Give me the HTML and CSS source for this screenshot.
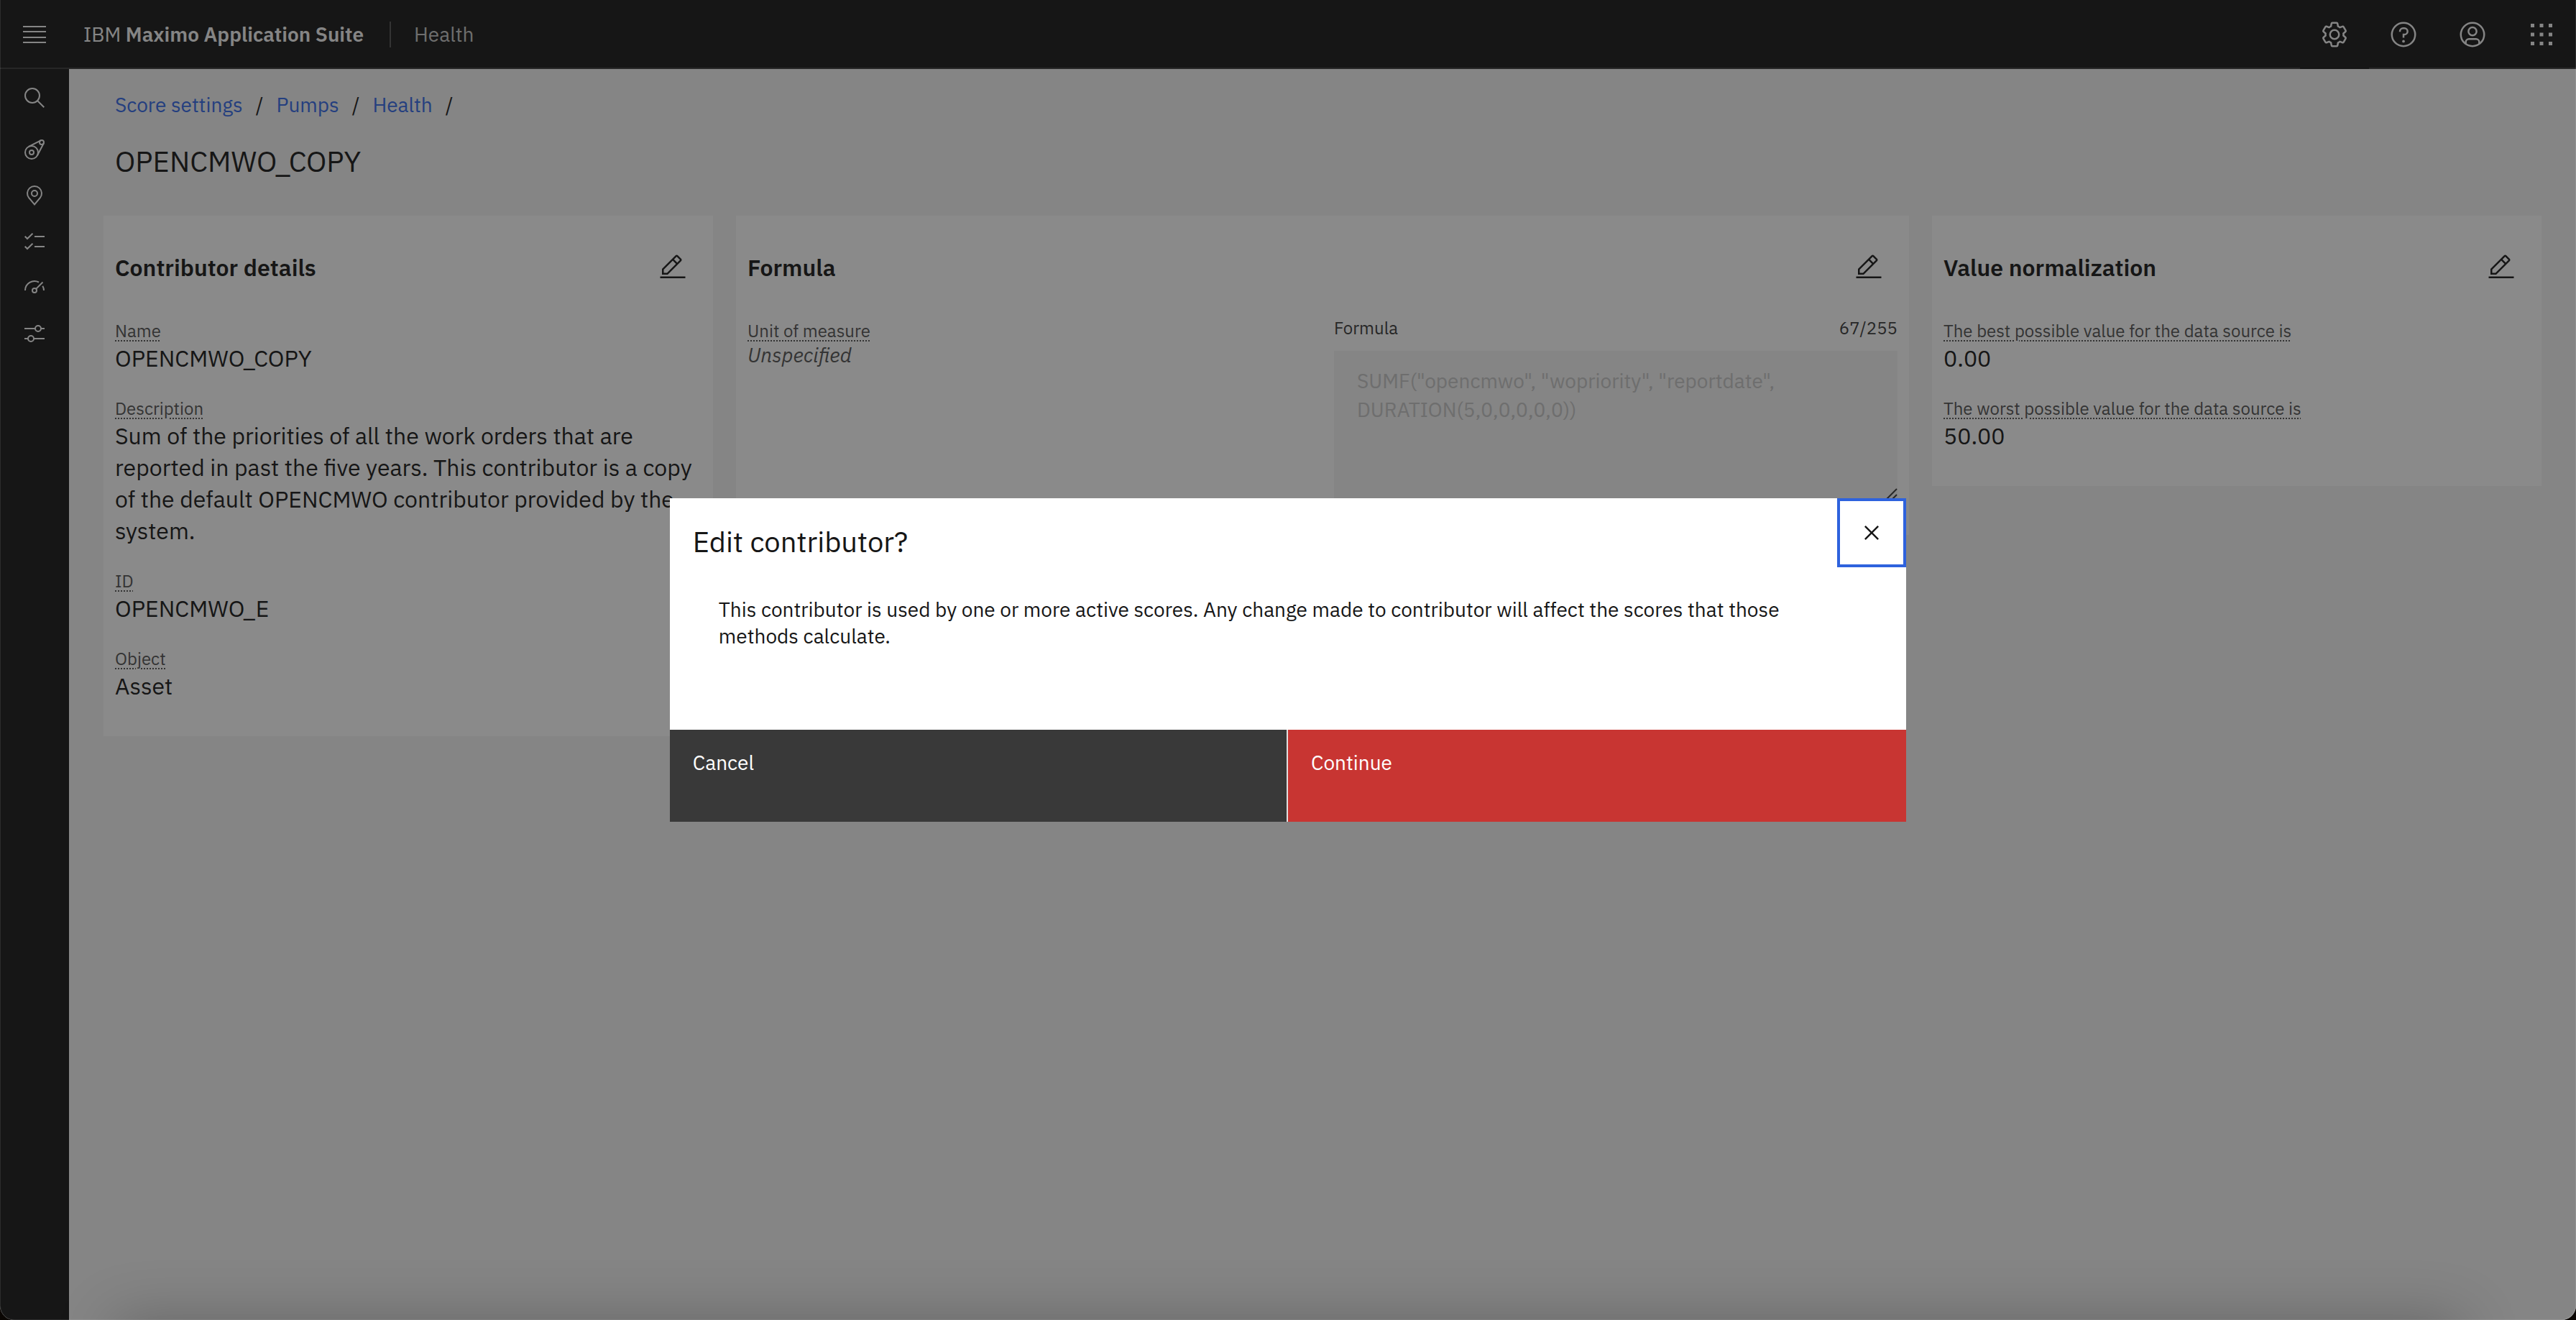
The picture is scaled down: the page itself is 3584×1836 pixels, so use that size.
FILE: index.html
```html
<!DOCTYPE html>
<html lang="en">
<head>
<meta charset="utf-8">
<meta name="viewport" content="width=device-width, initial-scale=1">
<title>IBM Maximo Application Suite - Health</title>
<link rel="stylesheet" href="styles.css">
</head>
<body>
<div class="app">
  <header class="topbar">
    <button class="topbar-button" type="button" aria-label="Menu">
      <svg class="icon-menu" viewBox="0 0 32 24"><path d="M0 0h32v2H0zM0 7h32v2H0zM0 15h32v2H0zM0 22h32v2H0z"/></svg>
    </button>
    <p class="brand">IBM <strong>Maximo Application Suite</strong></p>
    <span class="app-name">Health</span>
    <div class="topbar-actions">
      <button class="topbar-button topbar-button-current" type="button" aria-label="Settings">
        <svg class="icon-large" viewBox="0 0 32 32"><path d="M27,16.76c0-.25,0-.5,0-.76s0-.51,0-.77l1.92-1.68A2,2,0,0,0,29.3,11L26.94,7a2,2,0,0,0-1.73-1,2,2,0,0,0-.64.1l-2.43.82a11.35,11.35,0,0,0-1.31-.75l-.51-2.52a2,2,0,0,0-2-1.61H13.64a2,2,0,0,0-2,1.61l-.51,2.52a11.48,11.48,0,0,0-1.32.75L7.43,6.06A2,2,0,0,0,6.79,6,2,2,0,0,0,5.06,7L2.7,11a2,2,0,0,0,.41,2.51L5,15.24c0,.25,0,.5,0,.76s0,.51,0,.77L3.11,18.45A2,2,0,0,0,2.7,21L5.06,25a2,2,0,0,0,1.73,1,2,2,0,0,0,.64-.1l2.43-.82a11.35,11.35,0,0,0,1.31.75l.51,2.52a2,2,0,0,0,2,1.61h4.72a2,2,0,0,0,2-1.61l.51-2.52a11.48,11.48,0,0,0,1.32-.75l2.42.82a2,2,0,0,0,.64.1,2,2,0,0,0,1.73-1L29.3,21a2,2,0,0,0-.41-2.51ZM25.21,24l-3.43-1.16a8.86,8.86,0,0,1-2.71,1.57L18.36,28H13.64l-.71-3.55a9.36,9.36,0,0,1-2.7-1.57L6.79,24,4.43,20l2.72-2.4a8.9,8.9,0,0,1,0-3.13L4.43,12,6.79,8l3.43,1.16a8.86,8.86,0,0,1,2.71-1.57L13.64,4h4.72l.71,3.55a9.36,9.36,0,0,1,2.7,1.57L25.21,8,27.57,12l-2.72,2.4a8.9,8.9,0,0,1,0,3.13L27.57,20Z"/><path d="M16,22a6,6,0,1,1,6-6A5.94,5.94,0,0,1,16,22Zm0-10a3.91,3.91,0,0,0-4,4,3.91,3.91,0,0,0,4,4,3.91,3.91,0,0,0,4-4A3.91,3.91,0,0,0,16,12Z"/></svg>
      </button>
      <button class="topbar-button" type="button" aria-label="Help">
        <svg class="icon-large" viewBox="0 0 32 32"><circle class="line" cx="16" cy="16" r="13"/><circle cx="16" cy="23.5" r="1.5"/><path d="M17,8H15.5A4.49,4.49,0,0,0,11,12.5V13h2v-.5A2.5,2.5,0,0,1,15.5,10H17a2.5,2.5,0,0,1,0,5H15v4.5h2V17a4.5,4.5,0,0,0,0-9Z"/></svg>
      </button>
      <button class="topbar-button" type="button" aria-label="Account">
        <svg class="icon-large" viewBox="0 0 32 32"><circle class="line" cx="16" cy="16" r="13"/><circle class="line" cx="16" cy="12.500" r="4.500"/><path class="line" d="M8.500 26.500V24.500a3.500 3.500 0 0 1 3.500-3.500h8a3.500 3.500 0 0 1 3.500 3.500v2"/></svg>
      </button>
      <button class="topbar-button" type="button" aria-label="App switcher">
        <svg class="icon-large" viewBox="0 0 32 32"><path d="M4 4h4v4H4zM14 4h4v4h-4zM24 4h4v4h-4zM4 14h4v4H4zM14 14h4v4h-4zM24 14h4v4h-4zM4 24h4v4H4zM14 24h4v4h-4zM24 24h4v4h-4z"/></svg>
      </button>
    </div>
  </header>

  <div class="workspace">
    <nav class="sidenav" aria-label="Main">
      <button class="sidenav-search" type="button" aria-label="Search">
        <svg class="icon" viewBox="0 0 32 32"><circle class="line" cx="13" cy="13" r="10"/><path class="line" d="M20.500 20.500L29.300 29.300"/></svg>
      </button>
      <a class="sidenav-link" href="#assets" aria-label="Assets">
        <svg class="icon" viewBox="0 0 32 32"><circle class="line" cx="12" cy="20" r="9"/><circle class="line" cx="12" cy="20" r="3"/><circle class="line" cx="26" cy="6" r="3"/><path class="line" d="M8 11.900L24.700 3.300M20.200 23.700L28.800 7.200"/></svg>
      </a>
      <a class="sidenav-link" href="#locations" aria-label="Locations">
        <svg class="icon" viewBox="0 0 32 32"><circle class="line" cx="16" cy="13" r="4"/><path class="line" d="M16 28.400L8.200 19.200A10 10 0 1 1 23.800 19.200Z"/></svg>
      </a>
      <a class="sidenav-link" href="#work" aria-label="Work">
        <svg class="icon" viewBox="0 0 32 32"><path class="line" d="M2.700 8.700L6 12L13.500 4.700M16 9H30M2.700 22.700L6 26L13.500 18.700M16 23H30"/></svg>
      </a>
      <a class="sidenav-link" href="#scores" aria-label="Scores">
        <svg class="icon" viewBox="0 0 32 32"><path class="line" d="M3 20A13 13 0 0 1 22 8.500M27.300 13.700A13 13 0 0 1 29 20M18.100 17.900L27.500 8.500"/><circle class="line" cx="16" cy="20" r="3"/></svg>
      </a>
      <a class="sidenav-link" href="#settings" aria-label="Score settings">
        <svg class="icon" viewBox="0 0 32 32"><path class="line" d="M2 9H17M25 9H30M2 23H7M15 23H30"/><circle class="line" cx="21" cy="9" r="4"/><circle class="line" cx="11" cy="23" r="4"/></svg>
      </a>
    </nav>

    <main class="page">
      <nav class="breadcrumb" aria-label="Breadcrumb">
        <a class="crumb" href="#score-settings">Score settings</a><span class="slash">/</span>
        <a class="crumb" href="#pumps">Pumps</a><span class="slash">/</span>
        <a class="crumb" href="#health">Health</a><span class="slash">/</span>
      </nav>
      <h1 class="page-title">OPENCMWO_COPY</h1>

      <div class="cards">
        <section class="card">
          <div class="card-header">
            <h2 class="card-title">Contributor details</h2>
            <button class="edit" type="button" aria-label="Edit contributor details"><svg class="icon-large" viewBox="0 0 32 32"><path d="M2 26H30V28H2zM25.400 9c.8-.8.8-2 0-2.800l-3.600-3.600c-.8-.8-2-.8-2.800 0l-15 15V24h6.400L25.400 9zM20.400 4L24 7.600l-3 3L17.400 7 20.400 4zM6 22v-3.600l10-10 3.600 3.600-10 10H6z"/></svg></button>
          </div>
          <dl class="fields">
            <div><dt class="label"><span class="term">Name</span></dt><dd class="value">OPENCMWO_COPY</dd></div>
            <div><dt class="label"><span class="term">Description</span></dt><dd class="value">Sum of the priorities of all the work orders that are<br>reported in past the five years. This contributor is a copy<br>of the default OPENCMWO contributor provided by the<br>system.</dd></div>
            <div><dt class="label"><span class="term">ID</span></dt><dd class="value">OPENCMWO_E</dd></div>
            <div><dt class="label"><span class="term">Object</span></dt><dd class="value">Asset</dd></div>
          </dl>
        </section>

        <section class="card">
          <div class="card-header">
            <h2 class="card-title">Formula</h2>
            <button class="edit" type="button" aria-label="Edit formula"><svg class="icon-large" viewBox="0 0 32 32"><path d="M2 26H30V28H2zM25.400 9c.8-.8.8-2 0-2.800l-3.600-3.600c-.8-.8-2-.8-2.800 0l-15 15V24h6.400L25.400 9zM20.400 4L24 7.600l-3 3L17.400 7 20.400 4zM6 22v-3.600l10-10 3.600 3.600-10 10H6z"/></svg></button>
          </div>
          <div class="formula">
            <dl class="fields">
              <div><dt class="label"><span class="term">Unit of measure</span></dt><dd class="value value-empty">Unspecified</dd></div>
            </dl>
            <div class="expression">
              <div class="expression-head"><label for="formula">Formula</label><span>67/255</span></div>
              <div class="expression-box">
                <textarea id="formula" class="expression-input" disabled>SUMF("opencmwo", "wopriority", "reportdate",
DURATION(5,0,0,0,0,0))</textarea>
                <svg class="grip" viewBox="0 0 16 28"><path d="M1 26L15 12M9 26L15 20"/></svg>
              </div>
            </div>
          </div>
        </section>

        <section class="card">
          <div class="card-header">
            <h2 class="card-title">Value normalization</h2>
            <button class="edit" type="button" aria-label="Edit value normalization"><svg class="icon-large" viewBox="0 0 32 32"><path d="M2 26H30V28H2zM25.400 9c.8-.8.8-2 0-2.800l-3.600-3.600c-.8-.8-2-.8-2.800 0l-15 15V24h6.400L25.400 9zM20.400 4L24 7.600l-3 3L17.400 7 20.400 4zM6 22v-3.600l10-10 3.600 3.600-10 10H6z"/></svg></button>
          </div>
          <dl class="fields">
            <div><dt class="label"><span class="term">The best possible value for the data source is</span></dt><dd class="value">0.00</dd></div>
            <div><dt class="label"><span class="term">The worst possible value for the data source is</span></dt><dd class="value">50.00</dd></div>
          </dl>
        </section>
      </div>
    </main>
  </div>

  <div class="overlay">
    <dialog class="dialog" open aria-labelledby="dialog-title">
      <div class="dialog-head">
        <h2 id="dialog-title" class="dialog-title">Edit contributor?</h2>
        <button class="dialog-close" type="button" aria-label="Close"><svg class="icon-large" viewBox="0 0 32 32"><path d="M24 9.400L22.600 8 16 14.600 9.400 8 8 9.400 14.600 16 8 22.600 9.400 24 16 17.400 22.600 24 24 22.600 17.400 16z"/></svg></button>
      </div>
      <p class="dialog-text">This contributor is used by one or more active scores. Any change made to contributor will affect the scores that those<br>methods calculate.</p>
      <div class="dialog-actions">
        <button class="action action-cancel" type="button">Cancel</button>
        <button class="action action-danger" type="button">Continue</button>
      </div>
    </dialog>
  </div>
  <div class="window-shade"></div>
</div>
</body>
</html>
```
FILE: styles.css
```css
* { box-sizing: border-box; }

body {
  margin: 0;
  background: #0a0603;
  color: #161616;
  font-family: "IBM Plex Sans", "Noto Sans", sans-serif;
  font-size: 28px;
  line-height: 36px;
}

h1, h2, p, dl, dd { margin: 0; }

button {
  padding: 0;
  border: 0;
  background: none;
  color: inherit;
  font: inherit;
}

svg { display: block; fill: currentColor; }
.icon { width: 32px; height: 32px; }
.icon-large { width: 40px; height: 40px; }
.icon-menu { width: 32px; height: 24px; }
.line { fill: none; stroke: currentColor; stroke-width: 2; }

.app {
  position: relative;
  display: flex;
  flex-direction: column;
  min-height: 100vh;
  overflow: hidden;
  border-radius: 0 0 20px 20px;
  background: #f4f4f4;
}

/* Top bar */
.topbar {
  display: flex;
  align-items: center;
  height: 96px;
  background: #161616;
  box-shadow: inset 0 -2px #393939;
  color: #f4f4f4;
}
.topbar-button {
  display: flex;
  align-items: center;
  justify-content: center;
  width: 96px;
  height: 96px;
}
.topbar-button-current { background: #161616; }
.brand { padding: 0 36px 0 20px; }
.brand strong { font-weight: 600; }
.app-name {
  padding-left: 32px;
  border-left: 2px solid #525252;
  color: #c6c6c6;
}
.topbar-actions { display: flex; margin-left: auto; }

/* Side navigation */
.workspace { display: flex; flex: 1; }
.sidenav {
  flex: none;
  width: 96px;
  background: #161616;
  color: #f4f4f4;
}
.sidenav-search, .sidenav-link {
  display: flex;
  align-items: center;
  justify-content: center;
  width: 96px;
  height: 64px;
  color: inherit;
}
.sidenav-search { height: 80px; }

/* Page */
.page { flex: 1; padding: 32px 48px; }
.breadcrumb { display: flex; padding: 0 16px; }
.crumb { color: #3268e8; text-decoration: none; }
.slash { padding: 0 18px; }
.page-title {
  padding: 32px 16px 48px;
  font-size: 40px;
  font-weight: 400;
  line-height: 56px;
}

.cards {
  display: grid;
  grid-template-columns: 53fr 102fr 53fr;
  gap: 32px;
  align-items: start;
}
.card { padding: 48px 16px; background: #fff; }
.card-header {
  display: flex;
  align-items: start;
  justify-content: space-between;
  padding-right: 20px;
  margin-bottom: 52px;
}
.card-title {
  padding-top: 4px;
  font-size: 32px;
  font-weight: 600;
  line-height: 40px;
}
.edit { padding-top: 4px; }

.fields { display: grid; gap: 32px; align-content: start; }
.label {
  color: #525252;
  font-size: 24px;
  line-height: 32px;
}
.term { text-decoration: underline dotted 2px; text-underline-offset: 4px; }
.value { font-size: 32px; line-height: 44px; }
.value-empty {
  color: #525252;
  font-size: 28px;
  font-style: italic;
  line-height: 36px;
}

.formula { display: grid; grid-template-columns: 1fr 1fr; gap: 32px; }
.expression-head {
  display: flex;
  justify-content: space-between;
  margin-bottom: 20px;
  color: #393939;
  font-size: 24px;
  line-height: 24px;
}
.expression-box { position: relative; }
.expression-input {
  display: block;
  width: 100%;
  height: 208px;
  padding: 22px 32px;
  border: 0;
  background: #f4f4f4;
  color: #c6c6c6;
  font: inherit;
  line-height: 40px;
  resize: none;
}
.grip {
  position: absolute;
  right: 0;
  bottom: 0;
  width: 16px;
  height: 28px;
  fill: none;
  stroke: #393939;
  stroke-width: 2;
}

/* Modal */
.overlay {
  position: absolute;
  inset: 0;
  display: flex;
  align-items: center;
  justify-content: center;
  border-radius: 0 0 20px 20px;
  background: rgba(22, 22, 22, 0.5);
  box-shadow: inset 1px 0 rgba(255, 255, 255, 0.1), inset -1px -1px rgba(255, 255, 255, 0.1);
}
.dialog {
  position: static;
  width: 48%;
  margin: 0;
  padding: 0;
  border: 0;
  background: #fff;
  color: #161616;
}
.dialog-head {
  display: flex;
  align-items: start;
  justify-content: space-between;
  padding-left: 32px;
}
.dialog-title {
  padding-top: 32px;
  font-size: 40px;
  font-weight: 400;
  line-height: 56px;
}
.dialog-close {
  display: flex;
  align-items: center;
  justify-content: center;
  width: 96px;
  height: 96px;
  border: 4px solid #2e62dd;
}
.dialog-text { padding: 40px 68px 112px; line-height: 37px; }
.dialog-actions { display: grid; grid-template-columns: 1fr 1fr; }
.action {
  height: 128px;
  padding: 28px 32px 64px;
  color: #fff;
  text-align: left;
}
.action-cancel { border-right: 2px solid #e0e0e0; background: #393939; }
.action-danger { background: #c83532; }

/* Soft shade along the window's lower edge */
.window-shade {
  position: absolute;
  right: 200px;
  bottom: 0;
  left: 200px;
  box-shadow: 0 40px 80px 40px rgba(0, 0, 0, 0.25);
}
```
